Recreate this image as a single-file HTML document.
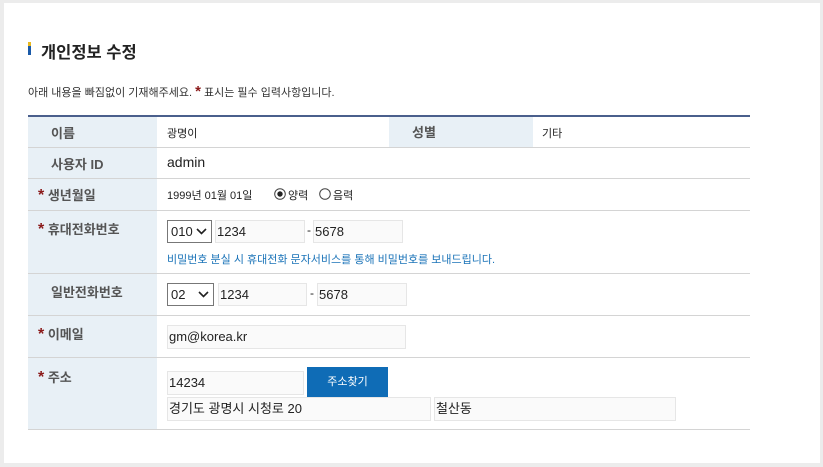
<!DOCTYPE html>
<html><head><meta charset="utf-8"><style>
*{margin:0;padding:0;box-sizing:border-box}
body{width:823px;height:467px;background:#ececec;position:relative;overflow:hidden;font-family:"Liberation Sans","Noto Sans CJK KR",sans-serif;color:#222}
.panel{position:absolute;left:4px;top:3px;width:816px;height:460px;background:#fff}
.a{position:absolute;white-space:nowrap}
.th{position:absolute;background:#e8f0f6;left:28px;width:129px}
.line{position:absolute;left:28px;width:722px;height:1px;background:#d4d4d4}
.lbl{font-size:13px;font-weight:bold;color:#555}
.star{color:#8b1a1a;font-size:16px;font-weight:bold}
.inp{position:absolute;background:#fafafa;border:1px solid #e6e6e6;font-size:13px;padding-left:1px;line-height:21px;color:#222}
.sel{position:absolute;border:1px solid #777;background:#fff;font-size:13px;line-height:21px;padding-left:3px}
.sel svg{position:absolute;right:4px;top:7px}
.v{font-size:11px}
</style></head><body>
<div class="panel"></div>
<div class="a" style="left:28px;top:42px;width:3px;height:4px;background:#e8b820"></div>
<div class="a" style="left:28px;top:46px;width:3px;height:9px;background:#1a5aa8"></div>
<div class="a" style="left:41px;top:39px;font-size:16.5px;font-weight:bold;color:#222">개인정보 수정</div>
<div class="a" style="left:28px;top:83px;font-size:11px;color:#333">아래 내용을 빠짐없이 기재해주세요. <span class="star" style="font-size:15px">*</span> 표시는 필수 입력사항입니다.</div>

<div class="a" style="left:28px;top:115px;width:722px;height:2px;background:#4a5f8c"></div>
<div class="th" style="top:117px;height:313px"></div>
<div class="a" style="left:389px;top:117px;width:144px;height:30px;background:#e8f0f6"></div>
<div class="line" style="top:147px"></div>
<div class="line" style="top:178px"></div>
<div class="line" style="top:210px"></div>
<div class="line" style="top:273px"></div>
<div class="line" style="top:315px"></div>
<div class="line" style="top:357px"></div>
<div class="line" style="top:429px"></div>

<div class="a lbl" style="left:51px;top:123px">이름</div>
<div class="a v" style="left:167px;top:125px">광명이</div>
<div class="a lbl" style="left:412px;top:122px">성별</div>
<div class="a v" style="left:542px;top:125px">기타</div>

<div class="a lbl" style="left:51px;top:154px">사용자 ID</div>
<div class="a" style="left:167px;top:154px;font-size:14px">admin</div>

<div class="a lbl" style="left:38px;top:185px"><span class="star">*</span> 생년월일</div>
<div class="a" style="left:167px;top:187px;font-size:11px">1999년 01월 01일</div>
<svg class="a" style="left:274px;top:188px" width="12" height="12"><circle cx="6" cy="6" r="5.3" fill="#fff" stroke="#444"/><circle cx="6" cy="6" r="2.7" fill="#222"/></svg>
<div class="a" style="left:288px;top:187px;font-size:11px">양력</div>
<svg class="a" style="left:319px;top:188px" width="12" height="12"><circle cx="6" cy="6" r="5.3" fill="#fff" stroke="#444"/></svg>
<div class="a" style="left:333px;top:187px;font-size:11px">음력</div>

<div class="a lbl" style="left:38px;top:219px"><span class="star">*</span> 휴대전화번호</div>
<div class="sel" style="left:167px;top:220px;width:45px;height:23px">010<svg width="11" height="7"><path d="M1 1l4.5 4.5L10 1" fill="none" stroke="#222" stroke-width="1.6"/></svg></div>
<div class="inp" style="left:215px;top:220px;width:90px;height:23px">1234</div>
<div class="a" style="left:307px;top:223px;font-size:12px">-</div>
<div class="inp" style="left:313px;top:220px;width:90px;height:23px">5678</div>
<div class="a" style="left:167px;top:251px;font-size:11px;color:#1a73b8">비밀번호 분실 시 휴대전화 문자서비스를 통해 비밀번호를 보내드립니다.</div>

<div class="a lbl" style="left:51px;top:282px">일반전화번호</div>
<div class="sel" style="left:167px;top:283px;width:47px;height:23px">02<svg width="11" height="7"><path d="M1 1l4.5 4.5L10 1" fill="none" stroke="#222" stroke-width="1.6"/></svg></div>
<div class="inp" style="left:218px;top:283px;width:89px;height:23px">1234</div>
<div class="a" style="left:310px;top:286px;font-size:12px">-</div>
<div class="inp" style="left:317px;top:283px;width:90px;height:23px">5678</div>

<div class="a lbl" style="left:38px;top:324px"><span class="star">*</span> 이메일</div>
<div class="inp" style="left:167px;top:325px;width:239px;height:24px">gm@korea.kr</div>

<div class="a lbl" style="left:38px;top:367px"><span class="star">*</span> 주소</div>
<div class="inp" style="left:167px;top:371px;width:137px;height:24px">14234</div>
<div class="a" style="left:307px;top:367px;width:81px;height:30px;background:#0f6cb6;color:#fff;font-size:11px;text-align:center;line-height:30px">주소찾기</div>
<div class="inp" style="left:167px;top:397px;width:264px;height:24px">경기도 광명시 시청로 20</div>
<div class="inp" style="left:434px;top:397px;width:242px;height:24px">철산동</div>
</body></html>
